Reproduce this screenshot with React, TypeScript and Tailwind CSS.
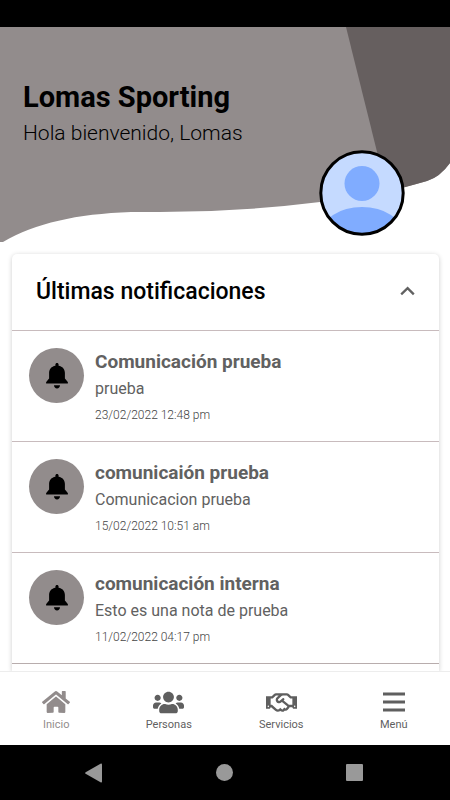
import { useState } from "react";
import { FaHome, FaRegHandshake, FaUsers } from "react-icons/fa";

const notifications = [
  { title: "Comunicación prueba", text: "prueba", date: "23/02/2022 12:48 pm" },
  { title: "comunicaión prueba", text: "Comunicacion prueba", date: "15/02/2022 10:51 am" },
  { title: "comunicación interna", text: "Esto es una nota de prueba", date: "11/02/2022 04:17 pm" },
];

const tabs = [
  { label: "Inicio", icon: <FaHome size={28} />, active: true },
  { label: "Personas", icon: <FaUsers size={31} /> },
  { label: "Servicios", icon: <FaRegHandshake size={31} /> },
  { label: "Menú", icon: <MenuIcon /> },
];

function MenuIcon() {
  return (
    <svg width="24" height="20" viewBox="0 0 24 20" fill="currentColor">
      <path d="M1 0.5h22v3H1zM1 8.5h22v3H1zM1 16.5h22v3H1z" />
    </svg>
  );
}

function BellIcon() {
  return (
    <svg width="22" height="26" viewBox="0 0 22 26" fill="currentColor">
      <path d="M11 0C11.9 0 12.6 0.7 12.6 1.6V2.7C16.6 3.4 18.9 6.2 18.9 10V15.6L21.4 18.4C22.4 19.5 22 20.6 20.9 20.6H1.1C0 20.6 -0.4 19.5 0.6 18.4L3.1 15.6V10C3.1 6.2 5.4 3.4 9.4 2.7V1.6C9.4 0.7 10.1 0 11 0Z" />
      <path d="M8 22.3H14C14 24.2 12.7 25.4 11 25.4S8 24.2 8 22.3Z" />
    </svg>
  );
}

function Avatar() {
  return (
    <svg width="86" height="86" viewBox="0 0 86 86">
      <defs>
        <clipPath id="avatar-clip">
          <circle cx="43" cy="43" r="41" />
        </clipPath>
      </defs>
      <circle cx="43" cy="43" r="41" fill="#c5daff" />
      <g clipPath="url(#avatar-clip)" fill="#80acff">
        <circle cx="43" cy="33.5" r="17.5" />
        <ellipse cx="43" cy="84" rx="41" ry="27" />
      </g>
      <circle cx="43" cy="43" r="41.2" fill="none" stroke="#000" strokeWidth="3" />
    </svg>
  );
}

function Header() {
  return (
    <header className="relative h-[215px] shrink-0">
      {/* wave background */}
      <svg
        className="absolute inset-0 h-full w-full"
        viewBox="0 0 450 215"
        preserveAspectRatio="none"
      >
        <path
          d="M0 0H450V136Q440 150 427 154C400 162 362 170 320 175Q240 185 160 185H131C76 187 36 196 3 215H0Z"
          fill="#928c8c"
        />
        <path
          d="M346 0H450V136Q440 150 427 154Q406 160 387 165Z"
          fill="#665f5f"
        />
      </svg>

      <div className="relative px-[23px] pt-[54px] text-black">
        <h1 className="text-[29px] leading-8 font-bold">Lomas Sporting</h1>
        <p className="mt-1 text-[21px] leading-8 font-light">Hola bienvenido, Lomas</p>
      </div>

      <button
        type="button"
        aria-label="Perfil"
        className="absolute right-[45px] bottom-[6px] rounded-full"
      >
        <Avatar />
      </button>
    </header>
  );
}

function NotificationList() {
  const [open, setOpen] = useState(true);

  return (
    <section className="mr-[11px] ml-3 mt-3 min-h-0 flex-1 rounded-t-[5px] bg-white shadow-[0_1px_5px_rgba(0,0,0,0.2)]">
      <button
        type="button"
        onClick={() => setOpen(!open)}
        aria-expanded={open}
        className="flex h-[76px] w-full items-center justify-between px-6 text-[23px] font-medium text-black"
      >
        Últimas notificaciones
        <svg
          className={open ? "" : "rotate-180"}
          width="16"
          height="16"
          viewBox="0 0 16 16"
          fill="none"
          stroke="#616161"
          strokeWidth="2.3"
        >
          <path d="M2.2 10.4L8.6 4.2l6.2 6.2" />
        </svg>
      </button>

      {open && (
        <ul className="border-b border-[#b8adad]">
          {notifications.map((item) => (
            <li
              key={item.date}
              className="flex h-[111px] gap-[11px] border-t border-[#c8bbbd] px-[17px] pt-[17px] text-[#616161]"
            >
              <span className="flex size-[55px] shrink-0 items-center justify-center rounded-full bg-[#928c8c] text-black">
                <BellIcon />
              </span>
              <div>
                <h2 className="text-[19px] leading-7 font-bold">{item.title}</h2>
                <p className="text-[16px] leading-[26px]">{item.text}</p>
                <time className="block pt-px text-[12px] leading-6 font-light text-[#444]">
                  {item.date}
                </time>
              </div>
            </li>
          ))}
        </ul>
      )}
    </section>
  );
}

function TabBar() {
  return (
    <nav className="relative grid h-[74px] shrink-0 grid-cols-4 border-t border-[#ededed] bg-white">
      {tabs.map((tab) => (
        <a
          key={tab.label}
          href="#"
          className={`flex flex-col items-center pt-[15px] text-[11px] leading-4 ${
            tab.active ? "text-[#928c8c]" : "text-[#5f5f5f]"
          }`}
        >
          <span className="flex h-[30px] items-center">{tab.icon}</span>
          {tab.label}
        </a>
      ))}
    </nav>
  );
}

function SystemBar() {
  return (
    <div className="grid h-[55px] shrink-0 grid-cols-[94px_1fr_94px] items-center justify-items-center bg-black pr-[49px] pl-[47px] text-[#999]">
      <button type="button" aria-label="Atrás">
        <svg width="18" height="20" viewBox="0 0 18 20" fill="currentColor">
          <path d="M0.6 10.8Q-0.4 10 0.6 9.2L15.5 0.8Q17 0.2 17 1.6V18.4Q17 19.8 15.5 19.2Z" />
        </svg>
      </button>
      <button type="button" aria-label="Inicio" className="size-[17px] rounded-full bg-[#999]" />
      <button type="button" aria-label="Recientes" className="size-[17px] rounded-[1px] bg-[#999]" />
    </div>
  );
}

export default function App() {
  return (
    <div className="flex h-screen flex-col bg-white font-['Roboto',sans-serif]">
      <div className="h-[27px] shrink-0 bg-black" />
      <main className="flex min-h-0 flex-1 flex-col overflow-hidden">
        <Header />
        <NotificationList />
      </main>
      <TabBar />
      <SystemBar />
    </div>
  );
}
